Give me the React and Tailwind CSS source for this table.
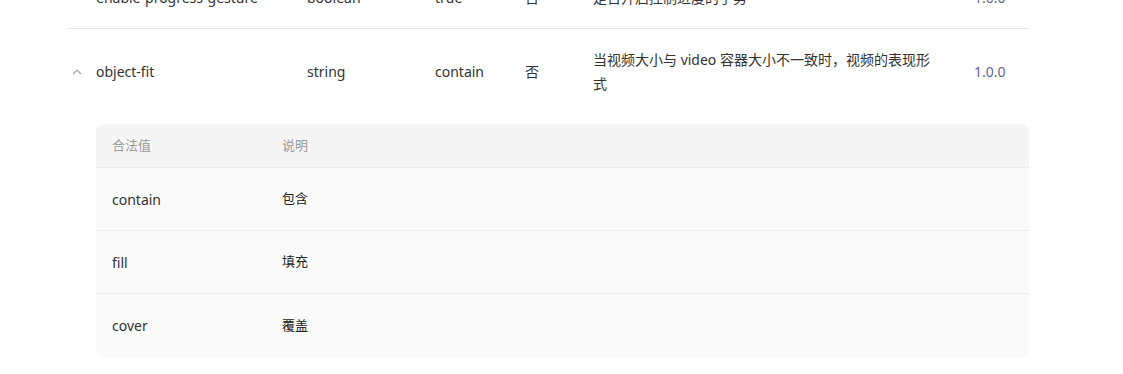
const cols = "grid grid-cols-[27px_211px_128px_90px_68px_381px_55px]";

const values = [
  { value: "contain", desc: "包含" },
  { value: "fill", desc: "填充" },
  { value: "cover", desc: "覆盖" },
];

const Chevron = () => (
  <svg width="10" height="6" viewBox="0 0 10 6" fill="none">
    <path d="M1 5L5 1.2L9 5" stroke="#9a9a9a" strokeWidth="1.1" />
  </svg>
);

export default function App() {
  return (
    <div
      className="w-[1123px] h-[374px] overflow-hidden bg-white text-[14px] text-[#333]"
      style={{ fontFamily: '"Noto Sans", "Noto Sans CJK SC", sans-serif' }}
    >
      <div className="ml-[69px] w-[960px]">
        {/* previous row, scrolled off the top */}
        <div className={`${cols} -mt-[32px] py-[18px] leading-[24px] border-b border-[#e5e5e5] items-center`}>
          <div></div>
          <div>enable-progress-gesture</div>
          <div>boolean</div>
          <div>true</div>
          <div>否</div>
          <div>是否开启控制进度的手势</div>
          <div className="text-[#5f6596]">1.0.0</div>
        </div>

        {/* expanded row */}
        <div className={`${cols} py-[19px] leading-[24px] items-center`}>
          <div className="flex justify-start pl-[3px]">
            <Chevron />
          </div>
          <div>object-fit</div>
          <div>string</div>
          <div>contain</div>
          <div>否</div>
          <div className="w-[345px]">当视频大小与 video 容器大小不一致时，视频的表现形式</div>
          <div className="text-[#5f6596]">1.0.0</div>
        </div>

        <div className="pl-[27px] pt-[9px]">
          <div className="rounded-lg overflow-hidden bg-[#fafafa]">
            <div className="grid grid-cols-[186px_1fr] h-[44px] items-center bg-[#f5f5f5] border-b border-[#ececec] text-[13px] text-[#999]">
              <div className="pl-[16px]">合法值</div>
              <div>说明</div>
            </div>
            {values.map((v, i) => (
              <div
                key={v.value}
                className={`grid grid-cols-[186px_1fr] h-[63px] items-center ${
                  i < values.length - 1 ? "border-b border-[#ececec]" : ""
                }`}
              >
                <div className="pl-[16px]">{v.value}</div>
                <div className="text-[13px] text-[#222]">{v.desc}</div>
              </div>
            ))}
          </div>
        </div>
      </div>
    </div>
  );
}
